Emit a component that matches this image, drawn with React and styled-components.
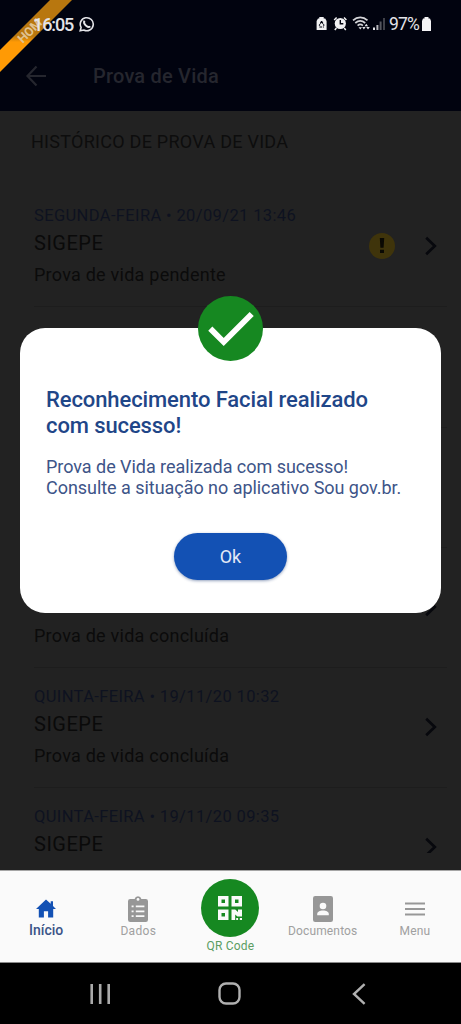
import React from "react";
import styled, { createGlobalStyle } from "styled-components";

const GlobalStyle = createGlobalStyle`
  * {
    box-sizing: border-box;
  }

  body {
    margin: 0;
    background: #000;
    font-family: Roboto, "Noto Sans", sans-serif;
  }

  svg {
    display: block;
    flex: none;
  }
`;

const Phone = styled.div`
  position: relative;
  width: 461px;
  height: 1024px;
  overflow: hidden;
  display: flex;
  flex-direction: column;
  background: #222;
`;

const Header = styled.header`
  height: 111px;
  background: #01030f;
`;

const StatusBar = styled.div`
  height: 48px;
  padding: 0 30px 0 33px;
  display: flex;
  align-items: center;
  justify-content: space-between;
`;

const StatusGroup = styled.div`
  display: flex;
  align-items: center;
  gap: ${(props) => props.$gap}px;
`;

const StatusText = styled.span`
  position: relative;
  z-index: 3;
  font-size: ${(props) => props.$size}px;
  font-weight: ${(props) => props.$weight || 400};
  letter-spacing: ${(props) => props.$spacing || 0}px;
  color: #e4e4e8;
`;

const AppBar = styled.div`
  height: 55px;
  padding-left: 25px;
  display: flex;
  align-items: center;
  gap: 46px;
`;

const AppTitle = styled.h1`
  margin: 0;
  font-size: 20px;
  font-weight: 500;
  letter-spacing: 0.2px;
  color: #25262e;
`;

const Ribbon = styled.div`
  position: absolute;
  top: 0;
  left: 0;
  width: 73px;
  height: 73px;
  clip-path: polygon(50px 0, 72px 0, 0 72px, 0 50px);
  background: linear-gradient(#b8770f 36px, #ff9a05 42px);
`;

const RibbonText = styled.span`
  position: absolute;
  top: 24px;
  left: 14px;
  width: 32px;
  text-align: center;
  font-size: 12.5px;
  line-height: 14px;
  font-weight: 700;
  color: #e0c391;
  transform: rotate(-45deg);
`;

const Content = styled.main`
  height: 759px;
  padding: 0 14px 0 16px;
`;

const SectionTitle = styled.h2`
  height: 76px;
  margin: 0;
  padding: 20px 0 0 15px;
  font-size: 18px;
  line-height: 22px;
  font-weight: 400;
  letter-spacing: 0.27px;
  color: #0d0d0d;
`;

const HistoryList = styled.div`
  height: 666px;
  overflow: hidden;
`;

const HistoryRow = styled.div`
  height: 120.3px;
  margin-left: 18px;
  padding: 19px 10px 0 0;
  display: flex;
  justify-content: space-between;
  border-bottom: 1px solid #1d1d1d;
`;

const HistoryText = styled.div`
  display: flex;
  flex-direction: column;
`;

const HistoryDate = styled.span`
  height: 24px;
  font-size: 16.5px;
  line-height: 20px;
  letter-spacing: 0.37px;
  color: #0e1220;
`;

const HistoryName = styled.span`
  height: 16px;
  margin: 5px 0 9px;
  font-size: 20px;
  line-height: 16px;
  letter-spacing: 0.5px;
  color: #0a0a0a;
`;

const HistoryStatus = styled.span`
  font-size: 18px;
  line-height: 30px;
  letter-spacing: 0.24px;
  color: #0b0b0b;
`;

const HistoryActions = styled.div`
  height: 80px;
  display: flex;
  align-items: center;
  gap: 30px;
`;

const WarningBadge = styled.div`
  width: 26px;
  height: 26px;
  border-radius: 50%;
  background: #3f340b;
  display: flex;
  align-items: center;
  justify-content: center;
`;

const Modal = styled.section`
  position: absolute;
  top: 328px;
  left: 20px;
  width: 421px;
  height: 285px;
  padding: 59px 26px 0;
  border-radius: 25px;
  background: #fff;
  display: flex;
  flex-direction: column;
`;

const ModalBadge = styled.div`
  position: absolute;
  top: -32px;
  left: 178px;
  width: 65px;
  height: 65px;
  border-radius: 50%;
  background: #168821;
  display: flex;
  align-items: center;
  justify-content: center;
`;

const ModalTitle = styled.h3`
  margin: 0;
  height: 70px;
  font-size: 22px;
  line-height: 26px;
  font-weight: 500;
  letter-spacing: -0.1px;
  white-space: nowrap;
  color: #1f4688;
`;

const ModalText = styled.p`
  margin: 0;
  height: 76px;
  font-size: 18px;
  line-height: 20.5px;
  letter-spacing: -0.04px;
  white-space: nowrap;
  color: #3d5488;
`;

const OkButton = styled.button`
  align-self: center;
  width: 113px;
  height: 47px;
  padding: 0;
  border: 0;
  border-radius: 24px;
  background: #1351b4;
  box-shadow: 0 1px 3px rgba(19, 50, 110, 0.45);
  font-family: inherit;
  font-size: 18px;
  color: #e3eaf6;
`;

const TabBar = styled.nav`
  height: 93px;
  background: #fafafa;
  border-top: 1px solid #a5a5a5;
  border-bottom: 1px solid #8a8a8a;
  display: grid;
  grid-template-columns: repeat(5, 1fr);
`;

const Tab = styled.div`
  padding-top: ${(props) => props.$top}px;
  display: flex;
  flex-direction: column;
  align-items: center;
`;

const TabIcon = styled.div`
  height: 26px;
  display: flex;
  align-items: center;
`;

const TabLabel = styled.span`
  font-size: ${(props) => props.$size || 12}px;
  line-height: 19px;
  font-weight: ${(props) => props.$weight || 400};
  letter-spacing: ${(props) => props.$spacing}px;
  color: ${(props) => props.$color};
`;

const QrCircle = styled.div`
  width: 58px;
  height: 58px;
  border-radius: 50%;
  background: #168821;
  display: flex;
  align-items: center;
  justify-content: center;
`;

const SystemBar = styled.footer`
  height: 61px;
  padding: 0 95px 0 90px;
  background: #000;
  display: grid;
  grid-template-columns: 128px 134px 14px;
  align-items: center;
`;

const history = [
  { date: "SEGUNDA-FEIRA • 20/09/21 13:46", name: "SIGEPE", status: "Prova de vida pendente", warning: true },
  {},
  {},
  { date: "", name: "", status: "Prova de vida concluída" },
  { date: "QUINTA-FEIRA • 19/11/20 10:32", name: "SIGEPE", status: "Prova de vida concluída" },
  { date: "QUINTA-FEIRA • 19/11/20 09:35", name: "SIGEPE", status: "" },
];

const WhatsappIcon = () => (
  <svg width="16" height="16" viewBox="0 0 16 16" fill="none" stroke="#e4e4e8">
    <path d="M1.2 14.8 2.1 11.4A6.5 6.5 0 1 1 4.8 14Z" strokeWidth="1.6" />
    <path d="M5.4 4.7C4.5 6.5 5.6 8.5 7.1 9.7 8.5 10.9 10.1 11.6 11.3 10.4" strokeWidth="1.9" />
  </svg>
);

const StatusIcons = () => (
  <svg width="70" height="16" viewBox="0 0 70 16">
    <path d="M3.3 1h4.4v1.6h1.5L10.6 5v9H.6V5L2 2.6h1.3z" fill="#f0f0f2" />
    <path d="M5.6 5.3 3.2 9.6M5.6 5.3l2.5 4.3M3.4 11h4.5" fill="none" stroke="#01030f" strokeWidth="1.2" strokeDasharray="2.7 .8" />
    <circle cx="24.3" cy="7.5" r="5.6" fill="#f0f0f2" />
    <path d="M18.2 4 20.6 1.5M28 1.5 30.4 4M20.4 12l-1.6 2M28.2 12l1.6 2" stroke="#f0f0f2" strokeWidth="1.5" />
    <path d="M24.3 4v3.8h3" fill="none" stroke="#01030f" strokeWidth="1.4" />
    <g fill="none" stroke="#d4d4d8" strokeWidth="1.7">
      <path d="M37 4.3c4.3-3.8 10.2-3.8 14.5 0M39.3 7c3-2.6 6.9-2.6 9.9 0M41.6 9.6c1.6-1.4 3.7-1.4 5.3 0" />
    </g>
    <path d="M42.5 11.3h3.5l-1.7 2.3zM50.3 7.8l1.8 2.4h-3.6zM46.2 11h3.4l-1.7 2.6zM50.2 11h3.6l-1.8 2.6z" fill="#e4e4e8" />
    <path d="M57 11.5h2v2.5h-2z" fill="#e4e4e8" />
    <path d="M60.4 9h2v5h-2z" fill="#b5b5ba" />
    <path d="M63.6 5.5h2V14h-2z" fill="#55565e" />
    <path d="M67 2h2v12h-2z" fill="#3f4048" />
  </svg>
);

const BatteryIcon = () => (
  <svg width="9" height="14" viewBox="0 0 9 14">
    <path d="M2.5 0h4v1.5H8L9 4v10H0V4l1-2.5h1.5z" fill="#f4f4f6" />
  </svg>
);

const BackArrow = () => (
  <svg width="22" height="22" viewBox="0 0 22 22" fill="none" stroke="#25262e" strokeWidth="2.2">
    <path d="M11.5 1.5 2.5 11l9 9.5M2.5 11H21" />
  </svg>
);

const Chevron = () => (
  <svg width="12" height="20" viewBox="0 0 12 20" fill="none" stroke="#07080d" strokeWidth="2.7">
    <path d="M1.2 1.7 9.8 10l-8.6 8.3" />
  </svg>
);

const ExclamationIcon = () => (
  <svg width="6" height="16" viewBox="0 0 6 16" fill="#0a0903">
    <path d="M.8 0h4.4l-.6 9.8H1.4zM1 11.7h4V15H1z" />
  </svg>
);

const CheckIcon = () => (
  <svg width="46" height="36" viewBox="0 0 46 36" fill="none" stroke="#fff" strokeWidth="5.8">
    <path d="M2.3 17.6 15.7 31 43.7 3" />
  </svg>
);

const HomeIcon = () => (
  <svg width="20" height="19" viewBox="0 0 20 19" fill="#1351b4">
    <path d="M10 .4 0 10h2.8v8.5h5.1v-6.2h4.2v6.2h5.1V10H20l-3-2.9V2.3h-2.3v2.5z" />
  </svg>
);

const ClipboardIcon = () => (
  <svg width="20" height="26" viewBox="0 0 20 26">
    <path d="M2.2 3H6.6a3.5 3.5 0 0 1 6.8 0h4.4A2.2 2.2 0 0 1 20 5.2v18.6a2.2 2.2 0 0 1-2.2 2.2H2.2A2.2 2.2 0 0 1 0 23.8V5.2A2.2 2.2 0 0 1 2.2 3z" fill="#979797" />
    <circle cx="10" cy="3.4" r="1.4" fill="#fafafa" />
    <path d="M3.6 10.4h2M3.6 15.3h2M3.6 20.2h2M7.8 10.4h8.6M7.8 15.3h8.6M7.8 20.2h8.6" stroke="#fafafa" strokeWidth="1.8" />
  </svg>
);

const QrIcon = () => (
  <svg width="24" height="24" viewBox="0 0 24 24">
    <path
      fill="#fafafa"
      fillRule="evenodd"
      d="M0 0h10.5v10.5H0zM3.5 3.5v3.5H7V3.5zM13.5 0H24v10.5H13.5zM17 3.5v3.5h3.5V3.5zM0 13.5h10.5V24H0zM3.5 17v3.5H7V17z"
    />
    <path fill="#fafafa" d="M13.5 13.5h3.7l2.8 2.6v-2.6h4v7h-4.6l-2.2-2V24h-3.7zM18.2 22h1.9v2h-1.9zM21.8 22H24v2h-2.2z" />
  </svg>
);

const DocumentIcon = () => (
  <svg width="20" height="26" viewBox="0 0 20 26">
    <rect width="20" height="26" rx="2.2" fill="#979797" />
    <circle cx="10" cy="10" r="3.3" fill="#fafafa" />
    <path d="M4.2 19.3v-1.2c0-2.3 2.5-3.5 5.8-3.5s5.8 1.2 5.8 3.5v1.2z" fill="#fafafa" />
  </svg>
);

const MenuIcon = () => (
  <svg width="20" height="14" viewBox="0 0 20 14" stroke="#979797" strokeWidth="2">
    <path d="M0 1.5h20M0 7h20M0 12.5h20" />
  </svg>
);

const RecentsIcon = () => (
  <svg width="21" height="22" viewBox="0 0 21 22" stroke="#aaa" strokeWidth="2.6">
    <path d="M1.7 1v20M10.2 1v20M18.7 1v20" />
  </svg>
);

const HomeKeyIcon = () => (
  <svg width="23" height="23" viewBox="0 0 23 23" fill="none" stroke="#b0b0b0" strokeWidth="2.4">
    <rect x="1.5" y="1.5" width="20" height="20" rx="6.5" />
  </svg>
);

const BackKeyIcon = () => (
  <svg width="14" height="22" viewBox="0 0 14 22" fill="none" stroke="#b0b0b0" strokeWidth="2.4">
    <path d="M12.6 1.2 2 11l10.6 9.8" />
  </svg>
);

const HistoryItem = ({ item }) => {
  return (
    <HistoryRow>
      <HistoryText>
        <HistoryDate>{item.date}</HistoryDate>
        <HistoryName>{item.name}</HistoryName>
        <HistoryStatus>{item.status}</HistoryStatus>
      </HistoryText>
      <HistoryActions>
        {item.warning && (
          <WarningBadge>
            <ExclamationIcon />
          </WarningBadge>
        )}
        <Chevron />
      </HistoryActions>
    </HistoryRow>
  );
};

const App = () => {
  return (
    <>
      <GlobalStyle />
      <Phone>
        <Ribbon>
          <RibbonText>HOM</RibbonText>
        </Ribbon>
        <Header>
          <StatusBar>
            <StatusGroup $gap={6}>
              <StatusText $size={18} $weight={500} $spacing={-1.1}>16:05</StatusText>
              <WhatsappIcon />
            </StatusGroup>
            <StatusGroup $gap={3}>
              <StatusIcons />
              <StatusText $size={17.5} $spacing={-0.8}>97%</StatusText>
              <BatteryIcon />
            </StatusGroup>
          </StatusBar>
          <AppBar>
            <BackArrow />
            <AppTitle>Prova de Vida</AppTitle>
          </AppBar>
        </Header>

        <Content>
          <SectionTitle>HISTÓRICO DE PROVA DE VIDA</SectionTitle>
          <HistoryList>
            {history.map((item, index) => (
              <HistoryItem key={index} item={item} />
            ))}
          </HistoryList>
        </Content>

        <TabBar>
          <Tab $top={24}>
            <TabIcon>
              <HomeIcon />
            </TabIcon>
            <TabLabel $color="#3a5488" $size={14} $weight={500} $spacing={0}>Início</TabLabel>
          </Tab>
          <Tab $top={25}>
            <TabIcon>
              <ClipboardIcon />
            </TabIcon>
            <TabLabel $color="#a0a0a0" $spacing={0.3}>Dados</TabLabel>
          </Tab>
          <Tab $top={8}>
            <QrCircle>
              <QrIcon />
            </QrCircle>
            <TabLabel $color="#5b9d63" $spacing={0.2}>QR Code</TabLabel>
          </Tab>
          <Tab $top={25}>
            <TabIcon>
              <DocumentIcon />
            </TabIcon>
            <TabLabel $color="#a0a0a0" $spacing={0.15}>Documentos</TabLabel>
          </Tab>
          <Tab $top={25}>
            <TabIcon>
              <MenuIcon />
            </TabIcon>
            <TabLabel $color="#a0a0a0" $spacing={0.15}>Menu</TabLabel>
          </Tab>
        </TabBar>

        <SystemBar>
          <RecentsIcon />
          <HomeKeyIcon />
          <BackKeyIcon />
        </SystemBar>

        <Modal>
          <ModalBadge>
            <CheckIcon />
          </ModalBadge>
          <ModalTitle>
            Reconhecimento Facial realizado
            <br />
            com sucesso!
          </ModalTitle>
          <ModalText>
            Prova de Vida realizada com sucesso!
            <br />
            Consulte a situação no aplicativo Sou gov.br.
          </ModalText>
          <OkButton>Ok</OkButton>
        </Modal>
      </Phone>
    </>
  );
};

export default App;
